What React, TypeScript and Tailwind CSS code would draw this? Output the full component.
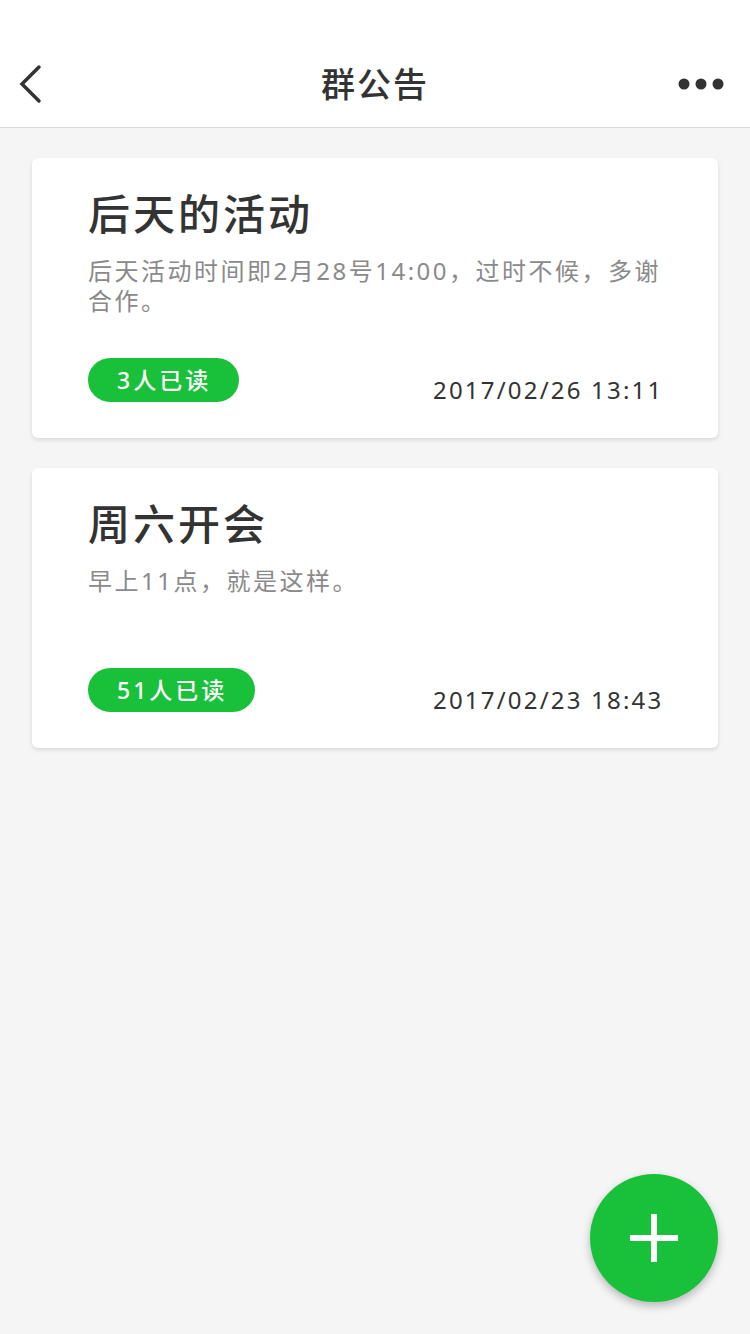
import React from "react";

const FONT = { fontFamily: '"Noto Sans", "Noto Sans CJK SC", sans-serif' };

type Notice = { title: string; body: string; reads: string; date: string };

const notices: Notice[] = [
  {
    title: "后天的活动",
    body: "后天活动时间即2月28号14:00，过时不候，多谢合作。",
    reads: "3人已读",
    date: "2017/02/26 13:11",
  },
  {
    title: "周六开会",
    body: "早上11点，就是这样。",
    reads: "51人已读",
    date: "2017/02/23 18:43",
  },
];

function Card({ n }: { n: Notice }) {
  return (
    <div className="h-[280px] rounded-[6px] bg-white shadow-[0_2px_4px_rgba(0,0,0,0.12)] pl-[56px] pr-[56px] pt-[30px] flex flex-col">
      <div className="text-[42px] leading-[52px] tracking-[3px] text-[#333333] font-medium">{n.title}</div>
      <div className="mt-[16px] h-[60px] text-[24px] leading-[30px] tracking-[2.5px] text-[#8a8a8a]">{n.body}</div>
      <div className="mt-[39px] flex items-center">
        <div className="w-[345px] shrink-0">
          <span className="inline-flex h-[44px] items-center rounded-full bg-[#19c13b] pl-[29px] pr-[28px] text-[23px] tracking-[3px] font-medium text-white">
            {n.reads}
          </span>
        </div>
        <div className="whitespace-nowrap pt-[20px] text-[24px] leading-[30px] tracking-[2.2px] text-[#333333]">{n.date}</div>
      </div>
    </div>
  );
}

export default function App() {
  return (
    <div className="relative h-[1334px] w-[750px] overflow-hidden bg-[#f5f5f5]" style={FONT}>
      <div className="h-[128px] bg-white border-b border-[#d9d9d9] pt-[40px]">
        <div className="relative flex h-[88px] items-center justify-between pl-[18px] pr-[20px]">
          <svg width="28" height="40" viewBox="0 0 28 40">
            <path d="M21 3 L4 20 L21 37" fill="none" stroke="#333" strokeWidth="3.5" strokeLinecap="round" strokeLinejoin="miter" />
          </svg>
          <div className="absolute left-0 right-0 text-center text-[34px] tracking-[2px] font-medium text-[#333333] pointer-events-none">
            群公告
          </div>
          <svg width="48" height="14" viewBox="0 0 48 14" className="mr-[5px]">
            <circle cx="7" cy="7" r="5.5" fill="#333" />
            <circle cx="24" cy="7" r="5.5" fill="#333" />
            <circle cx="41" cy="7" r="5.5" fill="#333" />
          </svg>
        </div>
      </div>
      <div className="flex flex-col gap-[30px] pl-[32px] pr-[32px] pt-[30px]">
        {notices.map((n) => (
          <Card key={n.title} n={n} />
        ))}
      </div>
      <button className="absolute left-[590px] top-[1174px] flex h-[128px] w-[128px] items-center justify-center rounded-full bg-[#19c13b] shadow-[0_4px_8px_rgba(0,0,0,0.25)]">
        <svg width="50" height="50" viewBox="0 0 50 50">
          <rect x="22" y="1" width="6" height="48" fill="white" />
          <rect x="1" y="22" width="48" height="6" fill="white" />
        </svg>
      </button>
    </div>
  );
}
